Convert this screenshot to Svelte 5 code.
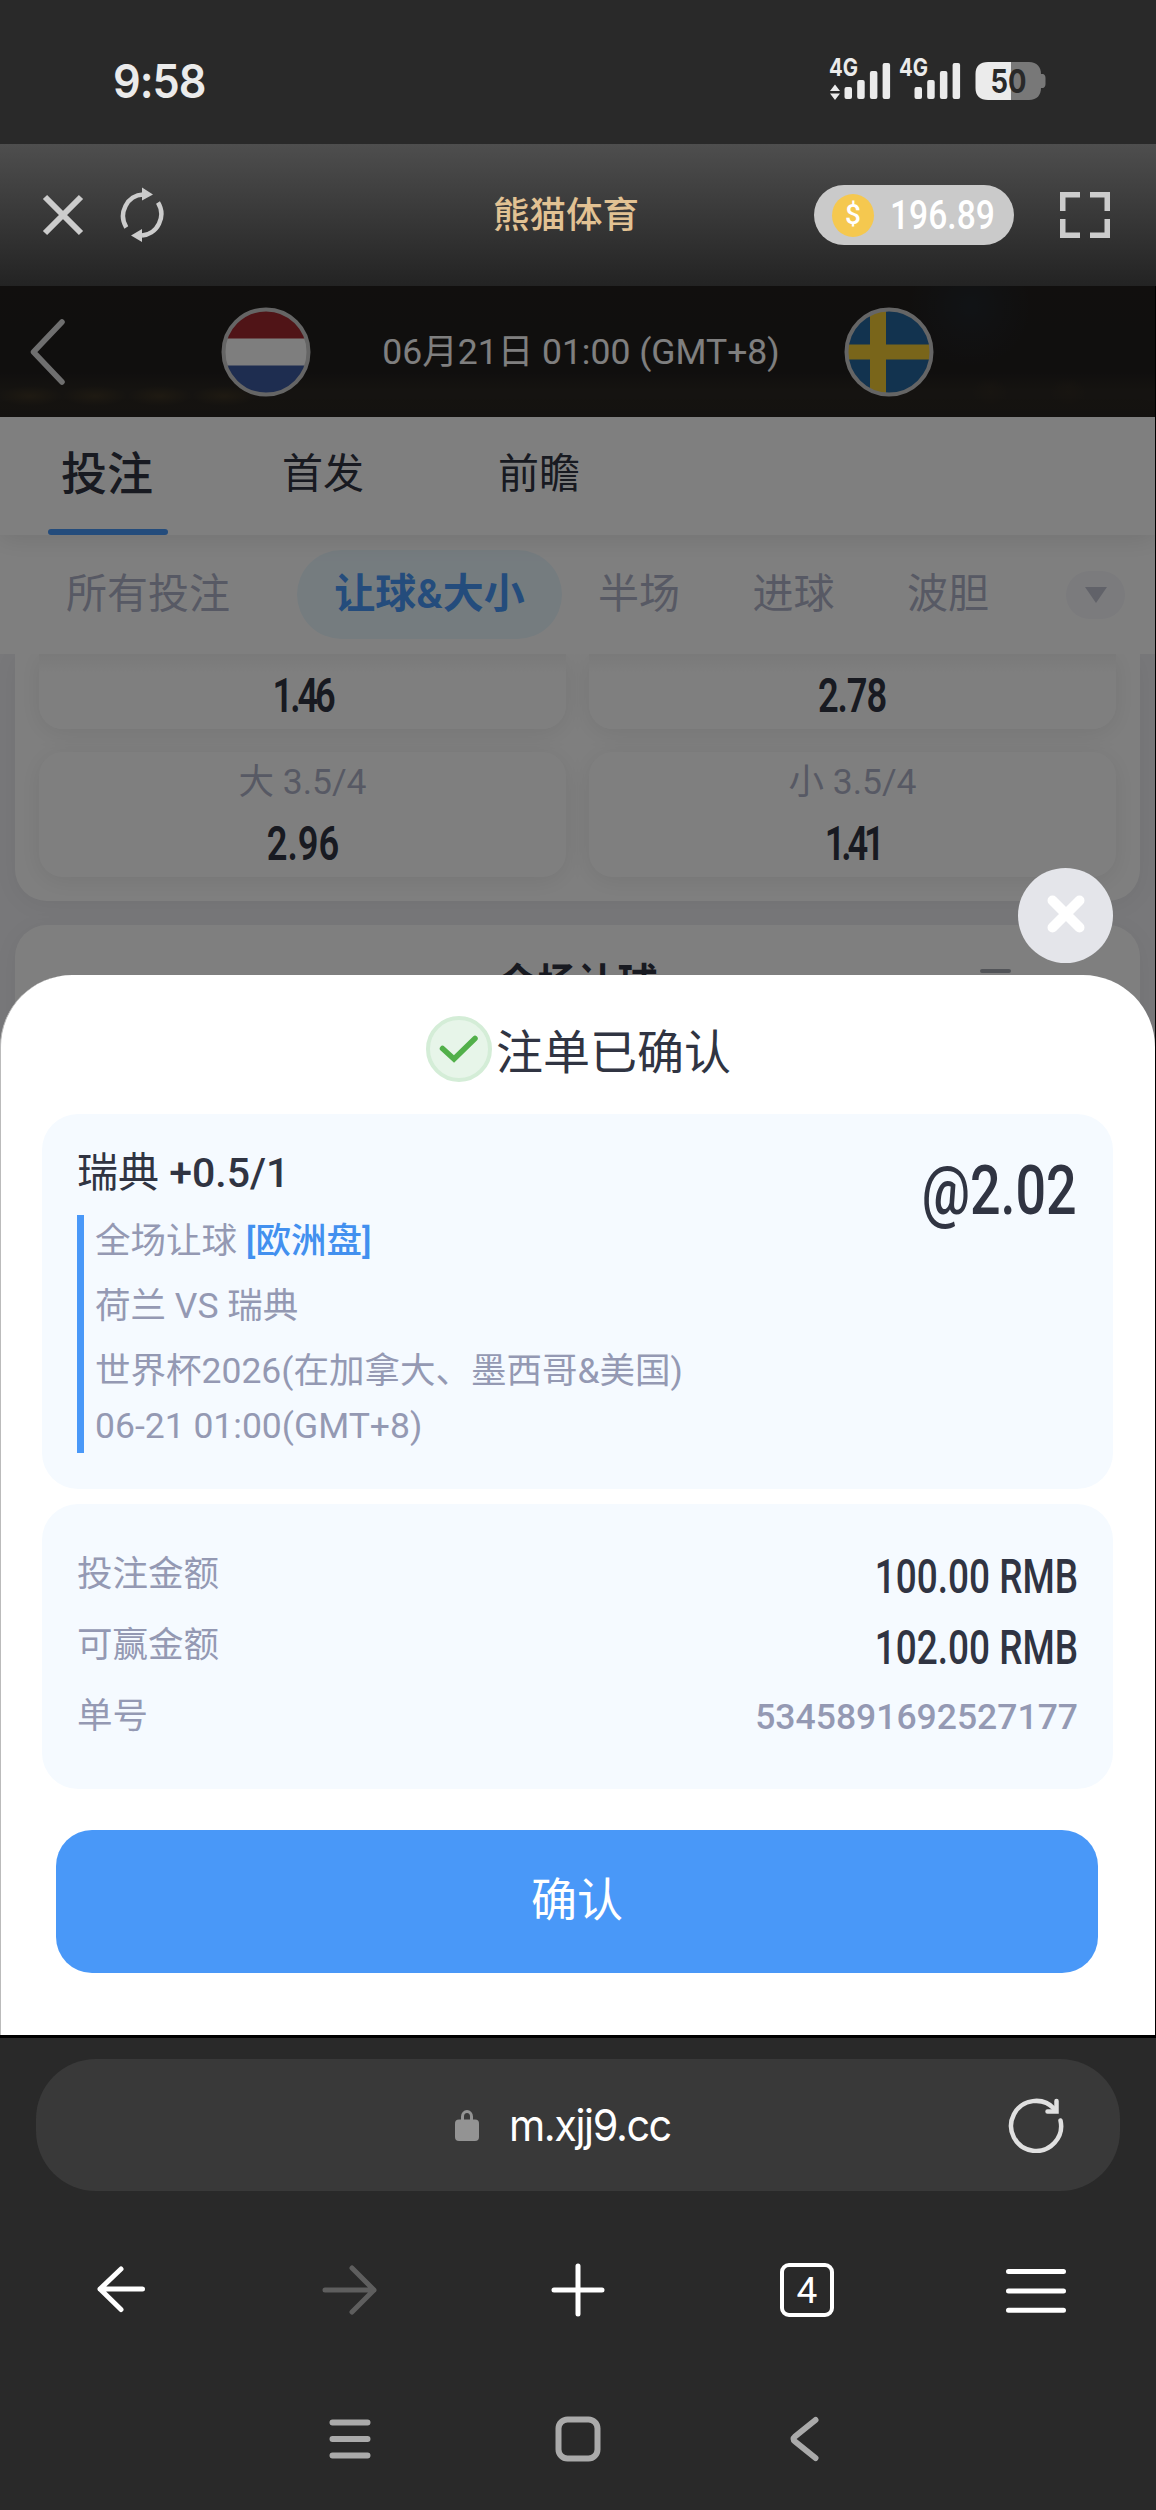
<script>
  const tabs = ['投注', '首发', '前瞻'];
  const filters = ['所有投注', '让球&大小', '半场', '进球', '波胆'];

  const odds = [
    { value: '1.46', track: -0.085 },
    { value: '2.78', track: -0.03 },
    { label: '大 3.5/4', value: '2.96', track: 0 },
    { label: '小 3.5/4', value: '1.41', track: -0.115 }
  ];

  const amounts = [
    { label: '投注金额', value: '100.00 RMB' },
    { label: '可赢金额', value: '102.00 RMB' }
  ];

  const signal = [12, 19, 28, 36];
</script>

<div class="phone">
  <div class="status">
    <span class="time">9:58</span>
    <svg class="status-icons" width="222" height="64" viewBox="824 48 222 64">
      {#each [829, 899] as x, n}
        <text {x} y="76" textLength="29" lengthAdjust="spacingAndGlyphs" class="net">4G</text>
        {#each signal as h, i}
          <rect x={x + 15.5 + i * 12.7} y={99 - h} width="7.5" height={h} rx="2" fill="#ebebeb" />
        {/each}
        {#if n === 0}
          <path d="M835 84.5l5 6.5h-10zM835 100l5-6.5h-10z" fill="#ebebeb" />
        {/if}
      {/each}
      <path d="M1011 62h18c8 0 12 5 12 12h1.500c2 0 3 2 3 4v6c0 2-1 4-3 4h-1.500c0 7-4 12-12 12h-18z" fill="#787878" />
      <path d="M1011 62h-23c-8 0-12.500 4-12.500 12v14c0 8 4.500 12 12.500 12h23z" fill="#ebebeb" />
      <text x="990.5" y="93" textLength="36" lengthAdjust="spacingAndGlyphs" class="level">50</text>
    </svg>
  </div>

  <header>
    <div class="side">
      <svg width="42" height="42" viewBox="0 0 42 42" stroke="#ccc" stroke-width="6">
        <path d="M3 3l36 36M39 3L3 39" />
      </svg>
      <svg width="48" height="56" viewBox="0 0 48 56" fill="none" stroke="#ccc" stroke-width="4.500">
        <path d="M8.300 40.500A20.500 21.500 0 0 1 25 7.500" />
        <path d="M40 15.500A20.500 21.500 0 0 1 24 48.500" />
        <path d="M24 .500l11 7-11 6z" fill="#ccc" stroke="none" />
        <path d="M24 55l-11-6.500 11-6.500z" fill="#ccc" stroke="none" />
      </svg>
    </div>
    <h1>熊猫体育</h1>
    <div class="side right">
      <div class="balance">
        <span class="coin">$</span>
        <span class="sum">196.89</span>
      </div>
      <svg width="50" height="46" viewBox="0 0 50 46" fill="none" stroke="#ccc" stroke-width="5.500">
        <path d="M20 2.750H2.750V19M30 2.750h17.250V19M20 43.250H2.750V27M30 43.250h17.250V27" />
      </svg>
    </div>
  </header>

  <div class="stage">
    <div class="match">
      <svg class="back" width="38" height="66" viewBox="0 0 38 66" fill="none" stroke="#dedede" stroke-width="5.500" stroke-linecap="round" stroke-linejoin="round">
        <path d="M33 3L4.500 33 33 63" />
      </svg>
      <svg class="flag" width="90" height="90" viewBox="0 0 90 90">
        <clipPath id="ball"><circle cx="45" cy="45" r="42" /></clipPath>
        <g clip-path="url(#ball)">
          <rect width="90" height="90" fill="#fdfdfd" />
          <rect width="90" height="31.500" fill="#a0292f" />
          <rect y="58.500" width="90" height="32" fill="#3d5aa0" />
        </g>
        <circle cx="45" cy="45" r="42.500" fill="none" stroke="#cacaca" stroke-width="4" />
      </svg>
      <span class="kickoff">06月21日 01:00 (GMT+8)</span>
      <svg class="flag" width="90" height="90" viewBox="0 0 90 90">
        <g clip-path="url(#ball)">
          <rect width="90" height="90" fill="#24669e" />
          <path d="M26 0h16v90H26zM0 37.500h90v15H0z" fill="#f2cb34" />
        </g>
        <circle cx="45" cy="45" r="42.500" fill="none" stroke="#cacaca" stroke-width="4" />
      </svg>
    </div>

    <nav class="tabs">
      {#each tabs as tab, i}
        <span class="tab" class:active={i === 0}>{tab}</span>
      {/each}
    </nav>

    <div class="filters">
      {#each filters as filter, i}
        <span class="filter" class:picked={i === 1}>{filter}</span>
      {/each}
      <span class="more">
        <svg width="24" height="18" viewBox="0 0 24 18"><path d="M1 1h22L12 17z" fill="#c3c5d2" /></svg>
      </span>
    </div>

    <div class="list">
      <section class="market">
        {#each odds as odd}
          <div class="odd" class:cut={!odd.label}>
            {#if odd.label}<span class="line">{odd.label}</span>{/if}
            <b style="letter-spacing: {odd.track}em">{odd.value}</b>
          </div>
        {/each}
      </section>
      <section class="market next">
        <h3>全场让球</h3>
        <svg class="tools" width="100" height="20" viewBox="0 0 100 20" fill="none" stroke="#a5a8b0" stroke-width="4" stroke-linecap="round">
          <path d="M3 3h27M3 15h27M73 10l12 8 12-8" />
        </svg>
      </section>
    </div>

    <div class="overlay">
      <button class="close" aria-label="关闭">
        <svg width="40" height="40" viewBox="0 0 40 40" stroke="#fff" stroke-width="10" stroke-linecap="round">
          <path d="M6.500 6.500l27 27M33.500 6.500l-27 27" />
        </svg>
      </button>
      <div class="sheet">
        <div class="title">
          <svg width="66" height="66" viewBox="0 0 66 66" fill="none">
            <circle cx="33" cy="33" r="31" fill="#e7f5e9" stroke="#d4edd7" stroke-width="4" />
            <path d="M16.500 32.500L28 43 49 22.500" stroke="#52b04a" stroke-width="5.500" stroke-linecap="round" />
          </svg>
          <h2>注单已确认</h2>
        </div>

        <div class="card bet">
          <div class="pick">
            <p class="team">瑞典 <span>+0.5/1</span></p>
            <div class="details">
              <p>全场让球 <em>[欧洲盘]</em></p>
              <p>荷兰 VS 瑞典</p>
              <p>世界杯2026(在加拿大、墨西哥&amp;美国)</p>
              <p class="when">06-21 01:00(GMT+8)</p>
            </div>
          </div>
          <span class="price">@2.02</span>
        </div>

        <div class="card receipt">
          {#each amounts as row}
            <div class="row">
              <span class="name">{row.label}</span>
              <b>{row.value}</b>
            </div>
          {/each}
          <div class="row">
            <span class="name">单号</span>
            <span class="order">5345891692527177</span>
          </div>
        </div>

        <button class="confirm">确认</button>
      </div>
    </div>
  </div>

  <footer>
    <div class="url">
      <svg class="lock" width="24" height="31" viewBox="0 0 24 31">
        <rect y="9.500" width="24" height="21.500" rx="4" fill="#939393" />
        <path d="M7.500 11V6.500a4.500 5 0 0 1 9 0V11" fill="none" stroke="#939393" stroke-width="3" />
      </svg>
      <span class="host">m.xjj9.cc</span>
      <svg class="reload" width="56" height="56" viewBox="0 0 56 56" fill="none" stroke="#e0e0e0" stroke-width="4.500" stroke-linecap="round">
        <path d="M52.500 23.500A25 25 0 1 1 46.500 12" />
        <path d="M48.500 4v10.500H39.500" stroke-linejoin="miter" />
      </svg>
    </div>

    <div class="toolbar">
      <svg width="60" height="60" viewBox="0 0 60 60"><path d="M52.500 29H10M31 9L10 29l21 20.500" /></svg>
      <svg width="60" height="60" viewBox="0 0 60 60" class="off"><path d="M6 30h49M33 8l22 22-22 22" /></svg>
      <svg width="60" height="60" viewBox="0 0 60 60"><path d="M6 30h48M30 6v48" /></svg>
      <span class="pages">4</span>
      <svg width="60" height="60" viewBox="0 0 60 60"><path d="M2.500 11.500h55M2.500 31h55M2.500 50.300h55" /></svg>
    </div>

    <div class="system">
      <svg width="60" height="60" viewBox="0 0 60 60"><path d="M12.500 13.500h35M12.500 30h35M12.500 46.500h35" /></svg>
      <svg width="60" height="60" viewBox="0 0 60 60"><rect x="10.500" y="10.500" width="39" height="39" rx="9" /></svg>
      <svg width="60" height="60" viewBox="0 0 60 60"><path d="M39.500 11L19 27.500q-3 2.500 0 5L39.500 49" /></svg>
    </div>
  </footer>
</div>

<style>
  :global(body) { margin: 0; background: #292929; }

  .phone {
    width: 1156px;
    height: 2510px;
    overflow: hidden;
    background: #292929;
    font-family: Roboto, "Noto Sans CJK SC", sans-serif;
    color: #303442;
  }
  .phone * { box-sizing: border-box; }
  p, h1, h2, h3 { margin: 0; }
  button { border: none; padding: 0; font-family: inherit; }
  svg { flex: none; }

  /* ── Status bar ── */
  .status {
    height: 144px;
    padding: 0 110px 0 113px;
    display: flex;
    justify-content: space-between;
    align-items: center;
  }
  .time {
    font-family: Inter, sans-serif;
    font-weight: 600;
    font-size: 46px;
    line-height: 60px;
    letter-spacing: -1px;
    margin-top: 18px;
    color: #ebebeb;
    transform: scaleX(0.94);
    transform-origin: left;
  }
  .status-icons { margin-top: 16px; }
  .net { font: 700 24px Inter, sans-serif; fill: #ebebeb; }
  .level { font: 700 32px Inter, sans-serif; fill: #292929; }

  /* ── Site header ── */
  header {
    height: 142px;
    padding: 0 46px 0 42px;
    display: flex;
    align-items: center;
    background: linear-gradient(#4e4e4e, #232323);
  }
  .side { flex: 1; display: flex; align-items: center; gap: 34px; }
  .right { justify-content: flex-end; gap: 46px; }
  h1 {
    font-size: 36.500px;
    font-weight: 500;
    color: #e2c293;
    line-height: 60px;
    margin: 2px 20px 0 0;
  }
  .balance {
    width: 200px;
    height: 60px;
    padding: 0 20px 0 18px;
    border-radius: 30px;
    background: #cacaca;
    display: flex;
    align-items: center;
    justify-content: space-between;
  }
  .coin {
    width: 42px;
    height: 43px;
    border-radius: 50%;
    background: #f5c84f;
    color: #fff;
    font: 500 28px/42px Roboto, sans-serif;
    text-align: center;
  }
  .sum {
    width: 104px;
    font-size: 40px;
    font-weight: 500;
    color: #fff;
    transform: scaleX(0.84);
    transform-origin: left;
  }

  /* ── Dimmed page ── */
  .stage {
    position: relative;
    width: 1155px;
    height: 1749px;
    overflow: hidden;
    background: #f0f0f4;
    box-shadow: 1px 0 #000;
  }
  .match {
    height: 131px;
    padding: 0 221px 0 29px;
    display: flex;
    align-items: center;
    background:
      radial-gradient(32px 10px at 30px 110px, #3d3424, transparent),
      radial-gradient(32px 10px at 95px 110px, #3d3424, transparent),
      radial-gradient(32px 10px at 160px 110px, #3d3424, transparent),
      radial-gradient(32px 10px at 224px 110px, #3d3424, transparent),
      radial-gradient(18px 14px at 990px 106px, #302a22, transparent),
      radial-gradient(18px 14px at 1068px 106px, #302a22, transparent),
      radial-gradient(60px 60px at 970px 20px, #23272c, transparent),
      linear-gradient(#221f1d, #201e1d 65%, #2b2722 80%, #2a2622);
  }
  .back { margin-right: 154px; }
  .kickoff { flex: 1; padding-left: 7px; text-align: center; font-size: 35.500px; color: #fff; margin-top: -7px; }

  .tabs {
    position: relative;
    z-index: 1;
    height: 118px;
    padding-left: 47px;
    display: flex;
    background: #fff;
    box-shadow: 0 4px 24px rgba(0, 0, 0, 0.1);
  }
  .tab {
    width: 120px;
    margin-right: 96px;
    line-height: 114px;
    font-size: 41px;
    text-align: center;
  }
  .tab.active {
    position: relative;
    font-size: 46px;
    font-weight: 500;
  }
  .tab.active::after {
    content: "";
    position: absolute;
    left: 1px;
    bottom: 0;
    width: 120px;
    height: 6px;
    border-radius: 3px;
    background: #4998f8;
  }

  .filters {
    position: relative;
    height: 119px;
    padding: 0 30px 0 66px;
    display: flex;
    align-items: center;
    background: #fff;
  }
  .filter { font-size: 41px; line-height: 89px; color: #afb3c8; margin-right: 72.500px; }
  .filter:first-child { margin-right: 67px; }
  .filter.picked {
    width: 265px;
    margin-right: 36px;
    border-radius: 45px;
    text-align: center;
    font-weight: 600;
    color: #4998f8;
    background: #ebf8ff;
  }
  .more {
    width: 59px;
    height: 48px;
    margin-left: auto;
    border-radius: 24px;
    display: flex;
    align-items: center;
    justify-content: center;
    background: #f6f6fb;
  }

  .list {
    display: flex;
    flex-direction: column;
    gap: 24px;
    padding: 0 15px;
  }
  .market {
    padding: 0 24px 24px;
    display: grid;
    grid-template-columns: 1fr 1fr;
    gap: 23px;
    background: #fff;
    border-radius: 0 0 32px 32px;
    box-shadow: 0 4px 24px rgba(0, 0, 0, 0.05);
  }
  .odd {
    height: 125px;
    border-radius: 24px;
    display: flex;
    flex-direction: column;
    align-items: center;
    background: #fff;
    box-shadow: 0 4px 24px rgba(0, 0, 0, 0.08);
  }
  .odd.cut {
    height: 75px;
    border-radius: 0 0 24px 24px;
    padding-top: 11px;
    background: linear-gradient(#f4f4f4, #fff 20px);
  }
  .line { font-size: 35.500px; line-height: 60px; color: #afb3c8; }
  .odd b {
    font-size: 49px;
    font-weight: 600;
    line-height: 62px;
    transform: scaleX(0.74);
  }
  .line + b { margin-top: 1px; }
  .next {
    position: relative;
    height: 300px;
    display: block;
    border-radius: 32px;
    text-align: center;
  }
  h3 { padding-top: 29px; font-size: 40px; line-height: 60px; font-weight: 600; }
  .tools { position: absolute; top: 43px; right: 61px; }

  /* ── Confirmation sheet ── */
  .overlay {
    position: absolute;
    inset: 0;
    z-index: 2;
    display: flex;
    flex-direction: column;
    justify-content: flex-end;
    background: rgba(0, 0, 0, 0.5);
  }
  .close {
    align-self: flex-end;
    width: 95px;
    height: 95px;
    margin: 0 42px 12px 0;
    padding-bottom: 4px;
    border-radius: 50%;
    background: #e4e5ea;
    display: flex;
    align-items: center;
    justify-content: center;
  }
  .sheet {
    height: 1060px;
    padding: 40px 42px 0 41px;
    border-left: 1px solid #bbb;
    border-radius: 72px 72px 0 0;
    background: #fff;
  }
  .title {
    height: 68px;
    display: flex;
    align-items: center;
    justify-content: center;
    gap: 4px;
    padding-left: 2px;
    margin-bottom: 31px;
  }
  h2 { font-size: 47px; line-height: 66px; font-weight: 400; margin-top: 8px; }

  .card { background: #f5faff; border-radius: 36px; }
  .bet {
    height: 375px;
    padding: 27px 36px 0 35px;
    display: flex;
    justify-content: space-between;
    align-items: flex-start;
    margin-bottom: 15px;
  }
  .team { font-size: 41px; line-height: 64px; font-weight: 400; }
  .team span { font-weight: 500; }
  .details {
    display: flow-root;
    height: 238px;
    margin-top: 10px;
    padding-left: 11px;
    border-left: 7px solid #4998f8;
    font-size: 35.500px;
    line-height: 65px;
    color: #9499b3;
    white-space: nowrap;
  }
  .details p:first-child { margin-top: -6px; }
  .details .when { line-height: 44px; }
  .details em { font-style: normal; font-weight: 500; color: #4290ef; }
  .price {
    margin-top: 10px;
    font-size: 69px;
    font-weight: 500;
    line-height: 80px;
    transform: scaleX(0.78);
    transform-origin: right;
  }

  .receipt { height: 285px; padding: 35px 35px 0; margin-bottom: 41px; }
  .row {
    height: 71px;
    display: flex;
    justify-content: space-between;
    align-items: center;
    font-size: 35.500px;
    color: #9499b3;
  }
  .name { margin-top: -8px; }
  .row b {
    font-size: 48px;
    font-weight: 500;
    color: #303442;
    transform: scaleX(0.77);
    transform-origin: right;
    margin-top: 4px;
  }
  .order { font-weight: 500; }

  .confirm {
    display: block;
    width: 1042px;
    height: 143px;
    margin-left: 14px;
    padding-bottom: 12px;
    border-radius: 36px;
    background: #4998f8;
    color: #fff;
    font-size: 46px;
  }

  /* ── Browser and system bars ── */
  footer { border-top: 3px solid #000; padding: 21px 36px 0; }
  .url {
    height: 132px;
    border-radius: 60px;
    background: #393939;
    display: flex;
    align-items: center;
    padding-left: 419px;
    gap: 30px;
  }
  .host {
    color: #fff;
    font-family: Inter, sans-serif;
    font-size: 44px;
    letter-spacing: -1.500px;
    transform: scaleX(0.94);
    transform-origin: left;
  }
  .reload { margin-left: auto; margin-right: 56px; }
  .toolbar, .system { display: flex; justify-content: space-between; align-items: center; }
  .toolbar { height: 198px; padding: 0 54px; }
  .toolbar svg { fill: none; stroke: #fff; stroke-width: 5; stroke-linecap: round; stroke-linejoin: round; }
  .toolbar .off { stroke: #5e5e5e; }
  .pages {
    width: 54px;
    height: 54px;
    margin: 0 3px;
    border: 4.500px solid #fff;
    border-radius: 9px;
    color: #fff;
    font: 400 37px/48px Roboto, sans-serif;
    text-align: center;
  }
  .system { height: 100px; padding: 0 284px; }
  .system svg { fill: none; stroke: #aaa; stroke-width: 6; stroke-linecap: round; }
</style>
